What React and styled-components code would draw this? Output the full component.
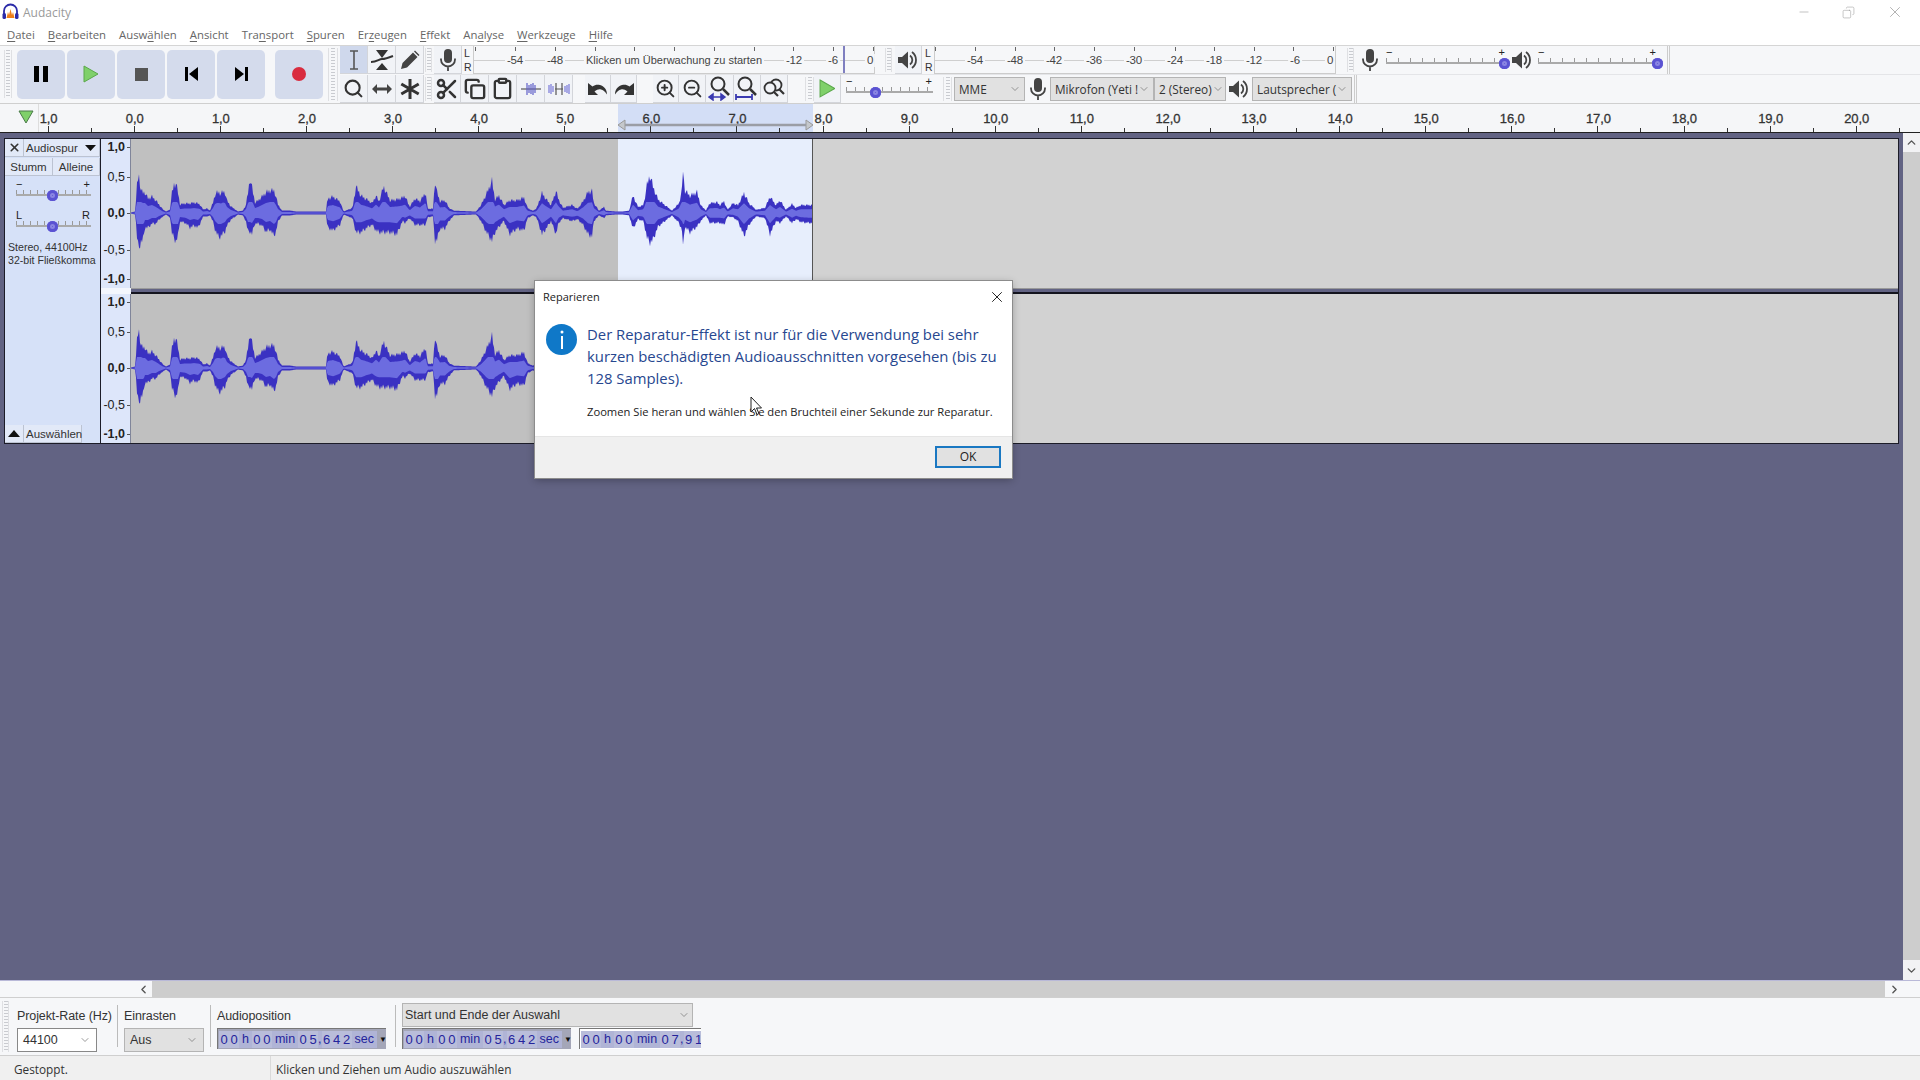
import React from "react";
import styled, { createGlobalStyle } from "styled-components";
import { Scissors, Copy, Clipboard, Search, ZoomIn, ZoomOut, Minus, X, ChevronDown, ChevronUp, ChevronLeft, ChevronRight } from "lucide-react";

const Global = createGlobalStyle`
  html, body { margin: 0; padding: 0; background: #fff; }
  #root { width: 1920px; height: 1080px; overflow: hidden; }
  * { box-sizing: border-box; }
`;

const Window = styled.div`
  position: relative;
  width: 1920px;
  height: 1080px;
  display: flex;
  flex-direction: column;
  overflow: hidden;
  font-family: "Liberation Sans", Arial, sans-serif;
  font-size: 12px;
  color: #222;
  background: #fff;
`;

/* title + menu */
const TitleBar = styled.div`
  height: 24px;
  display: flex;
  align-items: center;
  padding: 0 0 0 2px;
  background: #fff;
`;
const AppName = styled.span`
  margin-left: 4px;
  font-family: "Open Sans", sans-serif;
  font-size: 12px;
  color: #9a9a9a;
`;
const WinControls = styled.div`
  margin-left: auto;
  display: flex;
  align-items: center;
  gap: 31px;
  padding-right: 16px;
  color: #999;
`;
const MenuBar = styled.div`
  height: 21px;
  display: flex;
  align-items: center;
  gap: 13px;
  padding-left: 7px;
  font-family: "Open Sans", sans-serif;
  font-size: 11.35px;
  color: #666;
  background: #fff;
`;
const MenuItem = styled.span`
  white-space: nowrap;
  u { text-underline-offset: 2px; }
`;

/* toolbars */
const Toolbars = styled.div`
  height: 58px;
  display: flex;
  background: #f6f7f9;
  border-top: 1px solid #d5d5d5;
`;
const Grip = styled.div`
  width: ${p => p.$w || 8}px;
  align-self: stretch;
  margin: ${p => p.$m || "2px 0"};
  flex: none;
  border-left: 1px solid #dfe0e3;
  border-right: 1px solid #dfe0e3;
  background: repeating-linear-gradient(180deg, #c9cbd0 0 1px, transparent 1px 3px) center / 4px 100% no-repeat;
`;
const TransportBar = styled.div`
  width: 328px;
  flex: none;
  display: flex;
  align-items: center;
  padding: 0 0 1px 4px;
  ${Grip} { margin: 4px 5px 4px 0; }
`;
const BigButton = styled.div`
  width: 48px;
  height: 49px;
  margin-right: ${p => p.$mr ?? 2}px;
  flex: none;
  display: flex;
  align-items: center;
  justify-content: center;
  background: #d4dbec;
  border-radius: 5px;
`;
const ToolGrid = styled.div`
  width: 85px;
  flex: none;
  margin-left: 2px;
  display: grid;
  grid-template-columns: repeat(3, 28px);
  grid-auto-rows: 28px;
  gap: 1px 0;
`;
const ToolButton = styled.div`
  width: ${p => p.$w || 28}px;
  height: ${p => p.$h || 28}px;
  margin-right: ${p => p.$mr || 0}px;
  flex: none;
  display: flex;
  align-items: center;
  justify-content: center;
  color: #333;
  background: ${p => (p.$active ? "#cfd8ec" : "#f1f3f7")};
  border-right: 1px solid #d3d5da;
  border-bottom: 1px solid #d3d5da;
`;
const ToolRows = styled.div`
  flex: 1;
  display: flex;
  flex-direction: column;
`;
const ToolRow = styled.div`
  height: 29px;
  display: flex;
  align-items: center;
  & + & { border-top: 1px solid #e4e5e8; }
`;
const LR = styled.div`
  width: 10px;
  height: 27px;
  flex: none;
  display: flex;
  flex-direction: column;
  justify-content: space-between;
  padding-left: 1px;
  font-size: 10.5px;
  line-height: 13px;
  color: #333;
`;
const Meter = styled.div`
  position: relative;
  width: ${p => p.$w}px;
  height: 28px;
  flex: none;
  margin-right: ${p => p.$mr || 0}px;
  border-left: 1px solid #ccc;
  border-right: 1px solid #ccc;
  border-bottom: 1px solid #ccc;
  &::before {
    content: "";
    position: absolute;
    left: 0; right: 0; top: 14px;
    border-top: 1px solid #cfcfcf;
  }
`;
const MeterLabel = styled.span`
  position: absolute;
  top: 8px;
  transform: translateX(-50%);
  padding: 0 2px;
  font-size: ${p => p.$size || 11.5}px;
  line-height: 13px;
  letter-spacing: ${p => (p.$size ? 0 : -0.2)}px;
  color: #444;
  background: #f6f7f9;
  white-space: nowrap;
`;
const MeterTick = styled.i`
  position: absolute;
  top: 1px;
  width: 1px;
  height: 4px;
  background: #666;
`;
const MeterMark = styled.i`
  position: absolute;
  top: 0;
  bottom: 0;
  width: 2px;
  background: #7f7fc0;
`;
const SliderBox = styled.div`
  position: relative;
  width: ${p => p.$w}px;
  height: 24px;
  flex: none;
  margin: ${p => p.$m || "0"};
`;
const SliderSign = styled.span`
  position: absolute;
  top: ${p => p.$top ?? -3}px;
  ${p => (p.$right ? "right: 1px;" : "left: 0;")}
  font-size: 11px;
  line-height: 14px;
  color: #222;
`;
const SliderLine = styled.div`
  position: absolute;
  left: 0;
  right: 0;
  top: 10px;
  height: 6px;
  border-bottom: 2px solid #aaa;
  background: repeating-linear-gradient(90deg, #999 0 1px, transparent 1px ${p => p.$step || 12}px);
`;
const SliderKnob = styled.div`
  position: absolute;
  top: 10px;
  width: 11px;
  height: 11px;
  border-radius: 50%;
  background: #5a52d2;
  box-shadow: inset 0 0 0 3px #5a52d2, inset 0 0 0 5px #8a85e2;
`;
const Combo = styled.div`
  width: ${p => p.$w}px;
  height: 24px;
  flex: none;
  display: flex;
  align-items: center;
  justify-content: space-between;
  padding: 0 3px 0 4px;
  font-family: "Open Sans", sans-serif;
  font-size: 11.8px;
  color: #333;
  background: #e1e1e1;
  border: 1px solid #b4b4b4;
  white-space: nowrap;
  svg { flex: none; color: #777; }
`;
const Pad = styled.div`
  width: ${p => p.$w}px;
  flex: none;
`;
const IconSlot = styled.div`
  width: ${p => p.$w}px;
  flex: none;
  display: flex;
  justify-content: center;
  color: #444;
`;
const EndLine = styled.div`
  width: 3px;
  height: 100%;
  flex: none;
  border-left: 1px solid #ccc;
  border-right: 1px solid #ccc;
`;

/* timeline */
const Ruler = styled.div`
  position: relative;
  height: 30px;
  flex: none;
  background: #f5f6f8;
  border-top: 1px solid #cfcfcf;
  border-bottom: 1px solid #222;
`;
const RulerCorner = styled.div`
  width: 39px;
  height: 100%;
  display: flex;
  align-items: center;
  justify-content: center;
  padding: 0 0 2px 14px;
  border-right: 1px solid #ddd;
`;
const RulerSelection = styled.div`
  position: absolute;
  top: 0;
  bottom: 0;
  left: 618px;
  width: 195px;
  background: #d3def6;
`;
const SelectionArrow = styled.svg`
  position: absolute;
  left: 617px;
  top: 15px;
`;
const RulerLabel = styled.span`
  position: absolute;
  top: 8px;
  transform: translateX(-50%);
  font-size: 13px;
  line-height: 14px;
  letter-spacing: -0.1px;
  color: #333;
  -webkit-text-stroke: 0.3px #333;
`;
const RulerTick = styled.i`
  position: absolute;
  bottom: 0;
  width: 1px;
  height: ${p => (p.$major ? 6 : 4)}px;
  background: #333;
`;

/* main area */
const Main = styled.div`
  flex: 1;
  min-height: 0;
  display: flex;
  background: #626383;
`;
const TrackArea = styled.div`
  flex: 1;
  padding: 5px 0 0 4px;
`;
const VScroll = styled.div`
  width: 17px;
  flex: none;
  display: flex;
  flex-direction: column;
  align-items: center;
  color: #555;
  background: #f2f2f4;
`;
const VArrow = styled.div`
  height: ${p => p.$h}px;
  flex: none;
  display: flex;
  align-items: center;
  justify-content: center;
`;
const VThumb = styled.div`
  flex: 1;
  width: 100%;
  background: #cdcdcd;
`;
const Track = styled.div`
  width: 1895px;
  height: 306px;
  display: flex;
  border: 1px solid #1c1c28;
  background: #1c1c28;
`;
const TrackPanel = styled.div`
  width: 95px;
  flex: none;
  display: flex;
  flex-direction: column;
  margin-right: 1px;
  background: #d6e1f8;
`;
const PanelRow = styled.div`
  height: 19px;
  display: flex;
`;
const PanelButton = styled.div`
  width: ${p => p.$w}px;
  height: 18px;
  flex: none;
  display: flex;
  align-items: center;
  justify-content: ${p => (p.$left ? "space-between" : "center")};
  padding: ${p => (p.$left ? "0 3px 0 2px" : "0")};
  font-size: 11.5px;
  color: #333;
  background: #e2e9f8;
  border-right: 1px solid #bcc3d2;
  border-bottom: 1px solid #bcc3d2;
  white-space: nowrap;
`;
const PanelSlider = styled.div`
  position: relative;
  height: 31px;
  padding-top: 3px;
  margin: 0 9px 0 11px;
`;
const PanelInfo = styled.div`
  margin: 2px 0 0 3px;
  font-size: 10.6px;
  line-height: 13px;
  color: #333;
  white-space: nowrap;
`;
const PanelFoot = styled.div`
  margin-top: auto;
  display: flex;
`;
const Channels = styled.div`
  flex: 1;
  display: flex;
  flex-direction: column;
`;
const Channel = styled.div`
  height: 149px;
  display: flex;
`;
const ChannelGap = styled.div`
  height: 6px;
  display: flex;
  background: #626383;
  border-top: 1px solid #9a9a9a;
  border-bottom: 2px solid #14141e;
`;
const GapRuler = styled.div`
  width: 30px;
  margin: -1px 0 -2px;
  background: #f3f6fd;
`;
const VRuler = styled.div`
  position: relative;
  width: 30px;
  flex: none;
  background: #dde6fa;
  border-right: 1px solid #80859a;
`;
const VLabel = styled.span`
  position: absolute;
  right: 5px;
  top: ${p => p.$y - 7}px;
  font-size: 12.5px;
  line-height: 14px;
  color: #222;
  font-weight: ${p => (p.$bold ? 700 : 400)};
  &::after {
    content: "";
    position: absolute;
    right: -5px;
    top: 7px;
    width: 3px;
    border-top: 1px solid #555;
  }
`;
const WaveCanvas = styled.div`
  position: relative;
  flex: 1;
  display: flex;
`;
const ClipPart = styled.div`
  width: ${p => p.$w}px;
  flex: ${p => (p.$w ? "none" : 1)};
  background: ${p => p.$bg};
  border-right: ${p => (p.$edge ? "1px solid #555" : "0")};
`;
const WaveSvg = styled.svg`
  position: absolute;
  left: 0;
  top: 0;
`;

/* scroll + bottom */
const HScroll = styled.div`
  height: 17px;
  flex: none;
  display: flex;
  align-items: center;
  background: #f6f7f9;
  color: #555;
  border-top: 1px solid #b9b9d8;
`;
const HThumb = styled.div`
  flex: 1;
  height: 100%;
  margin-left: 2px;
  background: #cdcdcd;
`;
const ScrollSlot = styled.div`
  width: ${p => p.$w}px;
  flex: none;
  display: flex;
  justify-content: ${p => (p.$end ? "flex-end" : "flex-start")};
  padding: ${p => (p.$end ? "0" : "0 3px")};
`;
const SelectionBar = styled.div`
  height: 59px;
  flex: none;
  display: flex;
  padding-left: 2px;
  background: #f6f7f9;
  border-top: 1px solid #cfcfcf;
  border-bottom: 1px solid #cfcfcf;
  ${Grip} { margin: 3px 0; }
`;
const FieldGroup = styled.div`
  width: ${p => p.$w}px;
  flex: none;
  display: flex;
  flex-direction: column;
  padding-top: ${p => p.$pt ?? 10}px;
  ${p => p.$sep && `
    border-image: linear-gradient(180deg, transparent 8px, #bbb 8px, #bbb 48px, transparent 48px) 1;
    border-left: 1px solid;
    padding-left: 6px;
  `}
`;
const FieldLabel = styled.div`
  height: 20px;
  font-size: 12.5px;
  line-height: 16px;
  letter-spacing: -0.1px;
  color: #333;
  white-space: nowrap;
`;
const SelectBox = styled.div`
  width: ${p => p.$w}px;
  height: 24px;
  margin-bottom: ${p => p.$mb || 0}px;
  display: flex;
  align-items: center;
  justify-content: space-between;
  padding: 0 ${p => p.$pr ?? 5}px 0 ${p => p.$pl ?? 5}px;
  font-size: 12.5px;
  color: #333;
  background: ${p => p.$bg || "#fff"};
  border: 1px solid ${p => p.$border || "#888"};
  svg { color: #777; flex: none; }
`;
const TimeRow = styled.div`
  display: flex;
  gap: 8px;
`;
const TimeField = styled.div`
  width: ${p => p.$w}px;
  height: 21px;
  flex: none;
  display: flex;
  align-items: center;
  padding-left: 1px;
  overflow: hidden;
  font-size: 13px;
  color: #24249c;
  background: ${p => (p.$plain ? "#fff" : "#a4a6b8")};
  border-top: 1px solid #777;
  border-left: 1px solid #777;
`;
const Digit = styled.span`
  width: 10px;
  height: 17px;
  flex: none;
  text-align: center;
  line-height: 17px;
  background: #b9bdda;
`;
const Unit = styled.span`
  flex: none;
  height: 17px;
  line-height: 17px;
  font-size: 12.5px;
  padding: 0 ${p => (p.$comma ? 0 : 3)}px;
  background: #b0b4d6;
`;
const DropArrow = styled.span`
  margin-left: 2px;
  font-size: 8px;
  color: #111;
`;
const StatusBar = styled.div`
  height: 24px;
  flex: none;
  display: flex;
  align-items: center;
  font-family: "Open Sans", sans-serif;
  font-size: 11.8px;
  color: #333;
  background: #f0f0f0;
`;
const StatusCell = styled.div`
  width: ${p => p.$w}px;
  height: 100%;
  flex: none;
  display: flex;
  align-items: center;
  padding: 1px 0 0 ${p => p.$pl}px;
  border-right: ${p => (p.$edge ? "1px solid #dadada" : "0")};
  white-space: nowrap;
`;

/* dialog */
const Dialog = styled.div`
  position: absolute;
  left: 535px;
  top: 281px;
  width: 477px;
  height: 197px;
  display: flex;
  flex-direction: column;
  background: #fff;
  box-shadow: 0 0 0 1px #8c8c8c, 0 2px 8px rgba(0, 0, 0, 0.3);
  font-family: "Open Sans", sans-serif;
`;
const DialogTitle = styled.div`
  height: 31px;
  display: flex;
  align-items: center;
  justify-content: space-between;
  padding: 0 6px 0 8px;
  font-size: 11px;
  color: #222;
`;
const DialogBody = styled.div`
  flex: 1;
  display: flex;
  gap: 10px;
  padding: 11px 0 0 11px;
`;
const InfoCircle = styled.div`
  width: 31px;
  height: 31px;
  flex: none;
  margin-top: 1px;
  display: flex;
  align-items: center;
  justify-content: center;
  border-radius: 50%;
  background: #0f78c8;
`;
const DialogText = styled.div`
  display: flex;
  flex-direction: column;
  gap: 15px;
`;
const MainInstruction = styled.div`
  font-size: 14.87px;
  line-height: 22px;
  color: #27478f;
  white-space: nowrap;
`;
const DialogNote = styled.div`
  font-size: 11.2px;
  line-height: 16px;
  color: #222;
  white-space: nowrap;
`;
const DialogFooter = styled.div`
  height: 42px;
  flex: none;
  display: flex;
  align-items: center;
  justify-content: flex-end;
  padding: 0 11px 2px 0;
  background: #f0f0f0;
  border-top: 1px solid #e5e5e5;
`;
const OkButton = styled.div`
  width: 66px;
  height: 22px;
  display: flex;
  align-items: center;
  justify-content: center;
  font-size: 12px;
  color: #222;
  background: #e1e1e1;
  border: 2px solid #1a78c2;
`;
const Cursor = styled.svg`
  position: absolute;
  left: 750px;
  top: 396px;
`;

/* icons */
const Logo = () => (
  <svg width="17" height="18" viewBox="0 0 17 18">
    <path d="M2 12V8a6.500 6.500 0 0 1 13 0v4" fill="none" stroke="#2b2ba8" strokeWidth="1.800" />
    <rect x="0.500" y="10" width="3.500" height="6" rx="1.500" fill="#2b2ba8" />
    <rect x="13" y="10" width="3.500" height="6" rx="1.500" fill="#2b2ba8" />
    <path d="M4.500 15l1.500-6 1 3 1.500-6 1.500 6 1-3 1.500 6z" fill="#ef7f1a" />
  </svg>
);
const Pause = () => (<svg width="14" height="16"><rect width="5" height="16" fill="#000" /><rect x="9" width="5" height="16" fill="#000" /></svg>);
const Play = ({ s = 1 }) => (<svg width={16 * s} height={18 * s} viewBox="0 0 16 18"><path d="M1 1l14 8-14 8z" fill="#7fd06a" stroke="#5aa84a" /></svg>);
const Stop = () => (<svg width="13" height="13"><rect width="13" height="13" fill="#555" /></svg>);
const SkipBack = () => (<svg width="13" height="14"><rect width="3" height="14" fill="#000" /><path d="M13 0v14L4 7z" fill="#000" /></svg>);
const SkipNext = () => (<svg width="13" height="14"><path d="M0 0v14l9-7z" fill="#000" /><rect x="10" width="3" height="14" fill="#000" /></svg>);
const Rec = () => (<svg width="14" height="14"><circle cx="7" cy="7" r="7" fill="#d92c3f" /></svg>);
const IBeam = () => (<svg width="12" height="20" viewBox="0 0 12 20"><path d="M2 1h8M2 19h8M6 1v18" stroke="#555" strokeWidth="1.600" fill="none" /></svg>);
const Envelope = () => (
  <svg width="24" height="22" viewBox="0 0 24 22">
    <path d="M6 1h12l-6 8zM6 21l6-7 6 7z" fill="#333" />
    <path d="M1 13c6 0 8-3 11-3s6-1 11-3" stroke="#333" strokeWidth="2" fill="none" />
  </svg>
);
const Pencil = () => (<svg width="20" height="20" viewBox="0 0 20 20"><path d="M1 19l1.500-6L13 2.500l4.500 4.500L7 17.500zM14 1.500l1-1 4.500 4.500-1 1z" fill="#444" /></svg>);
const Mic = ({ c = "#444" }) => (
  <svg width="16" height="22" viewBox="0 0 16 22">
    <rect x="4" y="0" width="8" height="14" rx="4" fill={c} />
    <path d="M1 9.500v1a7 7 0 0 0 14 0v-1M8 18v4" stroke={c} strokeWidth="1.800" fill="none" />
  </svg>
);
const Speaker = () => (
  <svg width="20" height="20" viewBox="0 0 20 20">
    <path d="M0 7h4l6-5.500v17L4 13H0z" fill="#444" />
    <path d="M12 5.500a5.500 5.500 0 0 1 0 9M14 2a10 10 0 0 1 0 16" stroke="#444" strokeWidth="1.800" fill="none" />
  </svg>
);
const Arrows = () => (<svg width="22" height="12" viewBox="0 0 22 12"><path d="M1 6l5-5v3.500h10V1l5 5-5 5V7.500H6V11z" fill="#444" /></svg>);
const Star = () => (<svg width="22" height="22" viewBox="0 0 22 22"><path d="M11 1v20M2.300 6l17.400 10M19.700 6L2.300 16" stroke="#333" strokeWidth="3" /></svg>);
const TrimIcon = () => (
  <svg width="20" height="16" viewBox="0 0 20 16">
    <path d="M0 8h20" stroke="#777" strokeWidth="1.500" />
    {[6, 8, 10, 12, 14].map(x => (<path key={x} d={`M${x} ${2 + (x % 3)}v${12 - 2 * (x % 3)}`} stroke="#6060c8" strokeWidth="1.200" />))}
  </svg>
);
const SilenceIcon = () => (
  <svg width="22" height="16" viewBox="0 0 22 16">
    <path d="M7 8h8M8 2v12M14 2v12" stroke="#555" strokeWidth="1.200" />
    {[1, 3, 5, 17, 19, 21].map(x => (<path key={x} d={`M${x} ${3 + (x % 3)}v${10 - 2 * (x % 3)}`} stroke="#7777d8" strokeWidth="1.200" />))}
  </svg>
);
const Undo = ({ flip }) => (
  <svg width="22" height="15" viewBox="0 0 22 15" style={flip ? { transform: "scaleX(-1)" } : undefined}>
    <path d="M1 2v12h10l-3.500-3.500C10 8.500 12 8 14 8.500c2 .5 4 2 6 5 0-5-3-8.500-7-9.500-3-.7-5-.2-7.500 1.500z" fill="#333" />
  </svg>
);
const FitZoom = ({ wide }) => (
  <svg width="24" height="25" viewBox="0 0 24 25">
    <circle cx="10" cy="8" r="6.500" fill="none" stroke="#333" strokeWidth="2" />
    <path d="M15 13l6 6" stroke="#333" strokeWidth="2.500" />
    {wide
      ? <path d="M1 18v6M1 21h16M17 18v6" stroke="#3a3ab0" strokeWidth="1.800" />
      : <path d="M1 21l4-3v6zM17 21l-4-3v6zM4 21h10" stroke="#3a3ab0" strokeWidth="1.500" fill="#3a3ab0" />}
  </svg>
);
const ToggleZoom = () => (
  <svg width="22" height="22" viewBox="0 0 22 22">
    <circle cx="13" cy="7" r="5.500" fill="none" stroke="#333" strokeWidth="1.800" />
    <circle cx="7" cy="10" r="5.500" fill="#f1f3f7" stroke="#333" strokeWidth="1.800" />
    <path d="M11 14l4 4M16 11l5 5" stroke="#333" strokeWidth="2.200" />
  </svg>
);

/* ruler and meter data */
const SEC = 86.1;
const ZERO = 133.7;
const rulerMarks = [];
for (let i = -2; i <= 41; i++) {
  const x = ZERO + (i / 2) * SEC;
  rulerMarks.push({ x, major: i % 2 === 0, label: i === -2 ? "1,0" : i % 2 === 0 ? `${Math.abs(i / 2)},0` : null });
}
const inputMeter = [[514, "-54"], [554, "-48"], [793, "-12"], [832, "-6"], [869, "0"]];
const inputTicks = [474, 514, 554, 594, 633, 673, 713, 753, 792, 832, 872];
const outputMeter = [[975, "-54"], [1015, "-48"], [1054, "-42"], [1094, "-36"], [1134, "-30"], [1175, "-24"], [1214, "-18"], [1254, "-12"], [1295, "-6"], [1330, "0"]];
const outputTicks = [935, 975, 1015, 1054, 1094, 1134, 1175, 1214, 1254, 1293, 1333];

/* waveform envelope traced from the screenshot: x, up, down */
const ENVELOPE = [
  [131, 0, 0], [135, 1, 1], [136, 12, 10], [137.5, 34, 30], [139, 36, 34], [141, 22, 28], [143, 20, 26], [145, 20, 14], [148, 14, 14], [152, 16, 10], [156, 12, 10], [159, 8, 6], [163, 3, 3], [166, 1, 1], [170, 3, 4], [172, 20, 20], [174, 28, 24], [176, 29, 28], [178, 20, 22], [180, 8, 8], [184, 9, 9], [186, 9, 10], [190, 9, 14], [194, 10, 12], [198, 9, 14], [200, 8, 10], [203, 3, 3], [207, 4, 3], [210, 2, 2], [213, 10, 8], [215, 18, 16], [217, 20, 20], [219, 20, 24], [221, 19, 22], [223, 21, 20], [225, 20, 18], [227, 12, 12], [231, 6, 6], [234, 4, 4], [238, 1, 1], [243, 2, 2], [246, 8, 8], [248, 20, 18], [250, 34, 18], [252, 25, 20], [255, 10, 10], [258, 12, 10], [262, 16, 12], [266, 20, 18], [270, 22, 16], [274, 22, 22], [276, 16, 18], [278, 8, 8], [282, 2, 2], [290, 2, 2], [296, 1, 1],
  [326, 1, 1], [327.5, 15, 15], [333, 17, 18], [340, 12, 12], [343.5, 1, 1], [352.5, 5, 5], [356, 28, 20], [361, 18, 20], [367, 14, 15], [372, 10, 12], [376, 18, 18], [379, 12, 20], [383.6, 28, 20], [390, 13, 20], [397, 14, 22], [402.500, 16, 8], [405, 18, 10], [409.6, 6, 5], [415, 15, 12], [420, 12, 12], [425.7, 22, 12], [427.5, 4, 4], [433, 4, 3], [435, 34, 29], [437, 22, 28], [440, 12, 16], [445, 13, 16], [449, 5, 8], [454, 2, 2], [476, 1, 1], [481, 8, 8], [486.4, 20, 20], [492, 34, 29], [495, 14, 20], [499, 18, 14], [504, 8, 8], [509.6, 13, 22], [517, 13, 16], [524, 16, 18], [527.5, 5, 5], [533, 2, 2], [536.4, 4, 4], [542, 21, 22], [545, 16, 18], [551, 8, 8], [556, 23, 22], [558.6, 14, 10], [563, 5, 5], [572, 8, 8], [577.5, 4, 6], [583, 12, 12], [588, 22, 22], [592, 23, 24], [594, 10, 8], [599, 2, 2], [604, 6, 5], [606, 2, 2], [617, 1, 1],
  [622, 1, 1], [629, 2, 2], [633, 18, 16], [638, 6, 6], [643.5, 8, 8], [647, 30, 26], [650, 40, 31], [653, 28, 28], [658, 14, 14], [665, 8, 8], [672, 2, 2], [679, 10, 10], [682, 25, 18], [683, 48, 39], [684.6, 24, 14], [690, 18, 20], [697, 22, 14], [700.7, 8, 8], [706, 2, 2], [709.6, 10, 10], [717, 11, 10], [720, 8, 10], [724, 12, 12], [727.5, 3, 3], [733, 10, 4], [738, 8, 8], [744, 21, 24], [749, 10, 12], [756, 3, 3], [765, 5, 5], [770, 17, 22], [776, 8, 8], [780, 13, 10], [786, 3, 3], [792, 9, 10], [796, 5, 6], [800.7, 8, 9], [808, 8, 10], [812, 8, 10], [812.5, 0, 0],
];

function envelopeAt(x) {
  for (let i = 1; i < ENVELOPE.length; i++) {
    const [x1, u1, d1] = ENVELOPE[i];
    if (x <= x1) {
      const [x0, u0, d0] = ENVELOPE[i - 1];
      const t = (x - x0) / (x1 - x0 || 1);
      const k = x >= 326 ? 0.93 : 1;
      return [(u0 + (u1 - u0) * t) * k, (d0 + (d1 - d0) * t) * k];
    }
  }
  return [0, 0];
}

function buildWave() {
  const top = [], bottom = [], rmsTop = [], rmsBottom = [];
  for (let x = 131; x <= 812; x += 1) {
    const [u, d] = envelopeAt(x);
    const jitter = 0.85 + ((x * 7) % 5) * 0.07;
    const px = x - 131;
    const up = u > 3 ? u * jitter : u;
    const dn = d > 3 ? d * (1.14 - ((x * 3) % 5) * 0.07) : d;
    top.push(`${px},${74 - up - 0.5}`);
    bottom.unshift(`${px},${74 + dn + 0.5}`);
    rmsTop.push(`${px},${74 - Math.min(u * 0.5, 11)}`);
    rmsBottom.unshift(`${px},${74 + Math.min(d * 0.5, 11)}`);
  }
  return { peak: [...top, ...bottom].join(" "), rms: [...rmsTop, ...rmsBottom].join(" ") };
}
const wave = buildWave();

const vScale = [[8, "1,0", true], [38, "0,5"], [74, "0,0", true], [111, "-0,5"], [140, "-1,0", true]];

function ChannelView() {
  return (
    <Channel>
      <VRuler>
        {vScale.map(([y, t, b]) => (<VLabel key={t} $y={y} $bold={b}>{t}</VLabel>))}
      </VRuler>
      <WaveCanvas>
        <ClipPart $w={487} $bg="#c0c0c0" />
        <ClipPart $w={195} $bg="#e7eefc" $edge />
        <ClipPart $bg="#d2d2d2" />
        <WaveSvg width="690" height="149" viewBox="0 0 690 149">
          <polygon points={wave.peak} fill="#3a31c2" />
          <polygon points={wave.rms} fill="#6c6ce0" />
        </WaveSvg>
      </WaveCanvas>
    </Channel>
  );
}

function Slider({ w, knob, step, signs = true }) {
  return (
    <SliderBox $w={w}>
      {signs && <SliderSign>−</SliderSign>}
      {signs && <SliderSign $right>+</SliderSign>}
      <SliderLine $step={step} />
      <SliderKnob style={{ left: knob }} />
    </SliderBox>
  );
}

function Time({ value, w, plain, arrow }) {
  return (
    <TimeField $w={w} $plain={plain}>
      {value.match(/min|sec|h|,|\d/g).map((c, i) =>
        /\d/.test(c) ? <Digit key={i}>{c}</Digit> : <Unit key={i} $comma={c === ","}>{c}</Unit>
      )}
      {arrow && <DropArrow>▼</DropArrow>}
    </TimeField>
  );
}

const Chev = () => <ChevronDown size={12} strokeWidth={1.5} />;

const menu = [
  ["D", "atei"], ["B", "earbeiten"], ["Ausw", "ä", "hlen"], ["A", "nsicht"], ["Tra", "n", "sport"], ["S", "puren"], ["Er", "z", "eugen"], ["E", "ffekt"], ["An", "a", "lyse"], ["W", "erkzeuge"], ["H", "ilfe"],
];

export default function App() {
  return (
    <Window>
      <Global />
      <TitleBar>
        <Logo />
        <AppName>Audacity</AppName>
        <WinControls>
          <Minus size={14} strokeWidth={1} />
          <Copy size={13} strokeWidth={1} style={{ transform: "scaleX(-1)" }} />
          <X size={18} strokeWidth={1} />
        </WinControls>
      </TitleBar>

      <MenuBar>
        {menu.map(m => (
          <MenuItem key={m.join("")}>
            {m.length === 2 ? <><u>{m[0]}</u>{m[1]}</> : <>{m[0]}<u>{m[1]}</u>{m[2]}</>}
          </MenuItem>
        ))}
      </MenuBar>

      <Toolbars>
        <TransportBar>
          <Grip />
          <BigButton><Pause /></BigButton>
          <BigButton><Play /></BigButton>
          <BigButton><Stop /></BigButton>
          <BigButton><SkipBack /></BigButton>
          <BigButton $mr={10}><SkipNext /></BigButton>
          <BigButton><Rec /></BigButton>
        </TransportBar>
        <Grip $w={10} />
        <ToolGrid>
          <ToolButton $active><IBeam /></ToolButton>
          <ToolButton><Envelope /></ToolButton>
          <ToolButton><Pencil /></ToolButton>
          <ToolButton><Search size={21} strokeWidth={2.4} /></ToolButton>
          <ToolButton><Arrows /></ToolButton>
          <ToolButton><Star /></ToolButton>
        </ToolGrid>
        <ToolRows>
          <ToolRow>
            <Grip $w={7} />
            <Pad $w={2} />
            <ToolButton $w={28}><Mic /></ToolButton>
            <Pad $w={1} />
            <LR><span>L</span><span>R</span></LR>
            <Meter $w={402}>
              {inputTicks.map(x => <MeterTick key={x} style={{ left: x - 473 }} />)}
              {inputMeter.map(([x, t]) => <MeterLabel key={t} style={{ left: x - 473 }}>{t}</MeterLabel>)}
              <MeterLabel $size={11} style={{ left: 200 }}>Klicken um Überwachung zu starten</MeterLabel>
              <MeterMark style={{ left: 369 }} />
            </Meter>
            <Pad $w={10} />
            <Grip $w={7} />
            <Pad $w={3} />
            <ToolButton $w={27}><Speaker /></ToolButton>
            <Pad $w={2} />
            <LR><span>L</span><span>R</span></LR>
            <Meter $w={402}>
              {outputTicks.map(x => <MeterTick key={x} style={{ left: x - 935 }} />)}
              {outputMeter.map(([x, t]) => <MeterLabel key={t} style={{ left: x - 935 }}>{t}</MeterLabel>)}
            </Meter>
            <Pad $w={11} />
            <Grip $w={7} />
            <IconSlot $w={32}><Mic /></IconSlot>
            <Slider w={120} knob={113} />
            <IconSlot $w={32}><Speaker /></IconSlot>
            <Slider w={119} knob={114} />
            <Pad $w={10} />
            <EndLine />
          </ToolRow>
          <ToolRow>
            <Grip $w={7} />
            <Pad $w={2} />
            <ToolButton $w={27}><Scissors size={24} strokeWidth={2.5} /></ToolButton>
            <ToolButton><Copy size={22} strokeWidth={2.6} /></ToolButton>
            <ToolButton><Clipboard size={23} strokeWidth={2.4} /></ToolButton>
            <ToolButton><TrimIcon /></ToolButton>
            <ToolButton $mr={12}><SilenceIcon /></ToolButton>
            <ToolButton $w={26}><Undo /></ToolButton>
            <ToolButton $w={26} $mr={16}><Undo flip /></ToolButton>
            <ToolButton $w={26}><ZoomIn size={21} strokeWidth={2.2} /></ToolButton>
            <ToolButton $w={27}><ZoomOut size={21} strokeWidth={2.2} /></ToolButton>
            <ToolButton $w={28}><FitZoom /></ToolButton>
            <ToolButton $w={27}><FitZoom wide /></ToolButton>
            <ToolButton $w={27} $mr={17}><ToggleZoom /></ToolButton>
            <Grip $w={9} />
            <ToolButton $w={27}><Play s={1.05} /></ToolButton>
            <Pad $w={5} />
            <Slider w={87} knob={24} step={9} />
            <Pad $w={10} />
            <Grip $w={9} />
            <Pad $w={2} />
            <Combo $w={71}><span>MME</span><Chev /></Combo>
            <IconSlot $w={25}><Mic /></IconSlot>
            <Combo $w={104}><span>Mikrofon (Yeti !</span><Chev /></Combo>
            <Combo $w={72}><span>2 (Stereo)</span><Chev /></Combo>
            <IconSlot $w={26}><Speaker /></IconSlot>
            <Combo $w={100}><span>Lautsprecher (</span><Chev /></Combo>
            <Pad $w={2} />
            <EndLine />
          </ToolRow>
        </ToolRows>
      </Toolbars>

      <Ruler>
        <RulerSelection />
        <RulerCorner>
          <svg width="16" height="14" viewBox="0 0 16 14"><path d="M1 1h14L8 13z" fill="#7fd06a" stroke="#4a7a4a" /></svg>
        </RulerCorner>
        {rulerMarks.map(m => (
          <React.Fragment key={m.x}>
            <RulerTick $major={m.major} style={{ left: m.x }} />
            {m.label && <RulerLabel style={{ left: m.x + 1 }}>{m.label}</RulerLabel>}
          </React.Fragment>
        ))}
        <SelectionArrow width="197" height="12" viewBox="0 0 197 12">
          <path d="M1 6l7-5v10zM196 6l-7-5v10z" fill="#c5c8cc" stroke="#999" />
          <path d="M8 6h181" stroke="#9a9da5" strokeWidth="2.500" />
        </SelectionArrow>
      </Ruler>

      <Main>
        <TrackArea>
          <Track>
            <TrackPanel>
              <PanelRow>
                <PanelButton $w={19}><X size={13} strokeWidth={3} /></PanelButton>
                <PanelButton $w={76} $left>
                  Audiospur
                  <svg width="11" height="6"><path d="M0 0h11L5.500 6z" fill="#111" /></svg>
                </PanelButton>
              </PanelRow>
              <PanelRow>
                <PanelButton $w={48}>Stumm</PanelButton>
                <PanelButton $w={47}>Alleine</PanelButton>
              </PanelRow>
              <PanelSlider>
                <Slider w={75} knob={31} step={7} />
              </PanelSlider>
              <PanelSlider>
                <SliderSign $top={0}>L</SliderSign>
                <SliderSign $top={0} $right>R</SliderSign>
                <Slider w={75} knob={31} step={7} signs={false} />
              </PanelSlider>
              <PanelInfo>Stereo, 44100Hz<br />32-bit Fließkomma</PanelInfo>
              <PanelFoot>
                <PanelButton $w={19}>
                  <svg width="12" height="7"><path d="M6 0l6 7H0z" fill="#111" /></svg>
                </PanelButton>
                <PanelButton $w={58} $left>Auswählen</PanelButton>
              </PanelFoot>
            </TrackPanel>
            <Channels>
              <ChannelView />
              <ChannelGap><GapRuler /></ChannelGap>
              <ChannelView />
            </Channels>
          </Track>
        </TrackArea>
        <VScroll>
          <VArrow $h={19}><ChevronUp size={13} strokeWidth={2.5} /></VArrow>
          <VThumb />
          <VArrow $h={20}><ChevronDown size={13} strokeWidth={2.5} /></VArrow>
        </VScroll>
      </Main>

      <HScroll>
        <ScrollSlot $w={150} $end><ChevronLeft size={13} strokeWidth={2.5} /></ScrollSlot>
        <HThumb />
        <ScrollSlot $w={35}><ChevronRight size={13} strokeWidth={2.5} /></ScrollSlot>
      </HScroll>

      <SelectionBar>
        <Grip $w={7} />
        <Pad $w={8} />
        <FieldGroup $w={100}>
          <FieldLabel>Projekt-Rate (Hz)</FieldLabel>
          <SelectBox $w={80}>44100<Chev /></SelectBox>
        </FieldGroup>
        <FieldGroup $w={93} $sep>
          <FieldLabel>Einrasten</FieldLabel>
          <SelectBox $w={80} $bg="#e1e1e1" $border="#b4b4b4">Aus<Chev /></SelectBox>
        </FieldGroup>
        <FieldGroup $w={185} $sep>
          <FieldLabel>Audioposition</FieldLabel>
          <Time value="00h00min05,642sec" w={169} arrow />
        </FieldGroup>
        <FieldGroup $pt={5} $w={320} $sep>
          <SelectBox $w={291} $pl={2} $pr={2} $bg="#e1e1e1" $border="#b4b4b4" $mb={1}>Start und Ende der Auswahl<Chev /></SelectBox>
          <TimeRow>
            <Time value="00h00min05,642sec" w={169} arrow />
            <Time value="00h00min07,91" w={122} plain />
          </TimeRow>
        </FieldGroup>
      </SelectionBar>

      <StatusBar>
        <StatusCell $w={271} $pl={14} $edge>Gestoppt.</StatusCell>
        <StatusCell $w={600} $pl={5}>Klicken und Ziehen um Audio auszuwählen</StatusCell>
      </StatusBar>

      <Dialog>
        <DialogTitle>
          Reparieren
          <X size={18} strokeWidth={1.3} />
        </DialogTitle>
        <DialogBody>
          <InfoCircle>
            <svg width="4" height="19" viewBox="0 0 4 19"><circle cx="2" cy="2" r="1.500" fill="#fff" /><rect x="1" y="6" width="2" height="13" fill="#fff" /></svg>
          </InfoCircle>
          <DialogText>
            <MainInstruction>
              Der Reparatur-Effekt ist nur für die Verwendung bei sehr<br />
              kurzen beschädigten Audioausschnitten vorgesehen (bis zu<br />
              128 Samples).
            </MainInstruction>
            <DialogNote>Zoomen Sie heran und wählen Sie den Bruchteil einer Sekunde zur Reparatur.</DialogNote>
          </DialogText>
        </DialogBody>
        <DialogFooter><OkButton>OK</OkButton></DialogFooter>
      </Dialog>
      <Cursor width="13" height="20" viewBox="0 0 13 20">
        <path d="M1 1v15l3.500-3.500 2.500 6 2-1-2.500-5.500h5z" fill="#fff" stroke="#222" strokeWidth="1" />
      </Cursor>
    </Window>
  );
}
